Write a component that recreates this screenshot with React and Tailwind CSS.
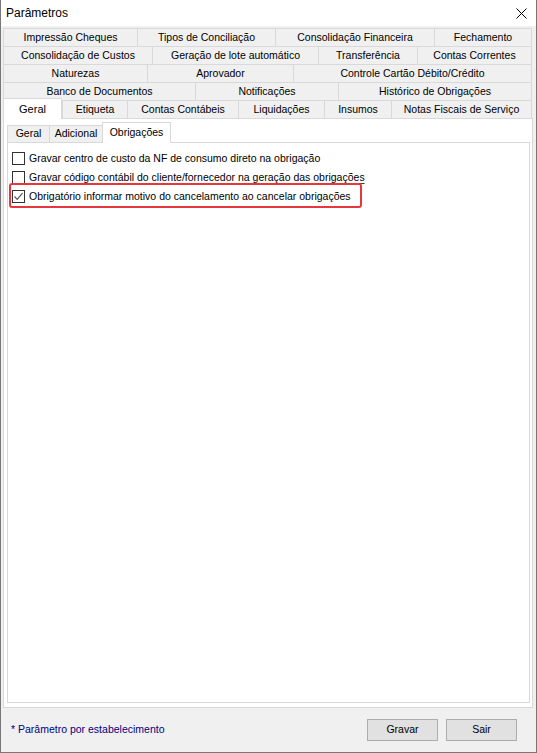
import React from 'react';

const rows = [
  [
    { label: 'Impressão Cheques', w: 'w-[134px]' },
    { label: 'Tipos de Conciliação', w: 'w-[138px]' },
    { label: 'Consolidação Financeira', w: 'w-[159px]' },
    { label: 'Fechamento', w: 'w-[98px]' },
  ],
  [
    { label: 'Consolidação de Custos', w: 'w-[149px]' },
    { label: 'Geração de lote automático', w: 'w-[166px]' },
    { label: 'Transferência', w: 'w-[99px]' },
    { label: 'Contas Correntes', w: 'w-[115px]' },
  ],
  [
    { label: 'Naturezas', w: 'w-[144px]' },
    { label: 'Aprovador', w: 'w-[146px]' },
    { label: 'Controle Cartão Débito/Crédito', w: 'w-[239px]' },
  ],
  [
    { label: 'Banco de Documentos', w: 'w-[192px]' },
    { label: 'Notificações', w: 'w-[143px]' },
    { label: 'Histórico de Obrigações', w: 'w-[194px]' },
  ],
];

const lastRow = [
  { label: 'Etiqueta', w: 'w-[65px]' },
  { label: 'Contas Contábeis', w: 'w-[111px]' },
  { label: 'Liquidações', w: 'w-[86px]' },
  { label: 'Insumos', w: 'w-[67px]' },
  { label: 'Notas Fiscais de Serviço', w: 'w-[141px]' },
];

const Tab = ({ label, w, last }) => (
  <div
    className={`${w} h-[18px] flex items-center justify-center bg-[#f0f0f0] border-t border-l border-[#d9d9d9] ${
      last ? 'border-r' : ''
    } whitespace-nowrap`}
  >
    {label}
  </div>
);

const Checkbox = ({ checked }) => (
  <span className="w-[13px] h-[13px] border border-[#333333] bg-white flex items-center justify-center shrink-0">
    {checked && (
      <svg width="11" height="11" viewBox="0 0 11 11">
        <path d="M1.5 5.5 L4.2 8.3 L9.5 2.2" fill="none" stroke="#555555" strokeWidth="1.2" />
      </svg>
    )}
  </span>
);

const App = () => {
  return (
    <div
      className="w-[537px] h-[753px] flex flex-col border-x border-b border-[#777777] bg-[#f0f0f0] text-[10.5px] text-black"
      style={{ fontFamily: '"Liberation Sans", Arial, sans-serif' }}
    >
      {/* title */}
      <div className="h-[26px] bg-white flex items-center justify-between pl-[5px] pr-[9px] shrink-0">
        <span className="text-[12px]">Parâmetros</span>
        <svg width="11" height="11" viewBox="0 0 11 11">
          <path d="M0.5 0.5 L10.5 10.5 M10.5 0.5 L0.5 10.5" stroke="#000" strokeWidth="1" />
        </svg>
      </div>

      <div className="pt-[2px] pl-[2px] pr-[3px] flex flex-col">
        {rows.map((row, i) => (
          <div key={i} className="flex">
            {row.map((t, j) => (
              <Tab key={t.label} {...t} last={j === row.length - 1} />
            ))}
          </div>
        ))}
        <div className="flex h-[18px]">
          <div className="relative z-10 w-[59px] h-[21px] -mt-[2px] bg-white border-t border-x border-[#d9d9d9] flex items-center justify-center text-[11px]">
            Geral
          </div>
          {lastRow.map((t, j) => (
            <Tab key={t.label} {...t} last={j === lastRow.length - 1} />
          ))}
        </div>

        {/* outer panel */}
        <div className="h-[590px] bg-white border border-[#d9d9d9] pt-[6px] pl-[3px] pr-[2px] flex flex-col">
          <div className="flex h-[17px]">
            <div className="w-[42px] h-[17px] bg-[#f0f0f0] border-t border-l border-[#d9d9d9] flex items-center justify-center">
              Geral
            </div>
            <div className="w-[53px] h-[17px] bg-[#f0f0f0] border-t border-l border-[#d9d9d9] flex items-center justify-center">
              Adicional
            </div>
            <div className="relative z-10 w-[69px] h-[21px] -mt-[3px] bg-white border-t border-x border-[#d9d9d9] flex items-start pt-[2px] justify-center">
              Obrigações
            </div>
          </div>

          {/* inner panel */}
          <div className="h-[561px] bg-white border border-[#d9d9d9] pt-[6px] pl-[4px] flex flex-col">
            <div className="h-[19px] flex items-center gap-[4px]">
              <Checkbox />
              <span>Gravar centro de custo da NF de consumo direto na obrigação</span>
            </div>
            <div className="h-[19px] flex items-center gap-[4px]">
              <Checkbox />
              <span className="underline decoration-[#444444] underline-offset-[2px] [text-decoration-skip-ink:none]">
                Gravar código contábil do cliente/fornecedor na geração das obrigações
              </span>
            </div>
            <div className="relative h-[19px] flex items-center gap-[4px]">
              <Checkbox checked />
              <span>Obrigatório informar motivo do cancelamento ao cancelar obrigações</span>
              <div className="absolute -left-[3px] -top-[4px] w-[353px] h-[25px] border-2 border-[#e8363e] rounded-[3px]" />
            </div>
          </div>
        </div>
      </div>

      {/* footer */}
      <div className="flex-1 flex items-center justify-between pl-[10px] pr-[19px]">
        <span className="text-[#000080]">* Parâmetro por estabelecimento</span>
        <div className="flex gap-[8px]">
          <button className="w-[71px] h-[22px] bg-[#e1e1e1] border border-[#adadad] flex items-center justify-center">
            Gravar
          </button>
          <button className="w-[71px] h-[22px] bg-[#e1e1e1] border border-[#adadad] flex items-center justify-center">
            Sair
          </button>
        </div>
      </div>
    </div>
  );
};

export default App;
